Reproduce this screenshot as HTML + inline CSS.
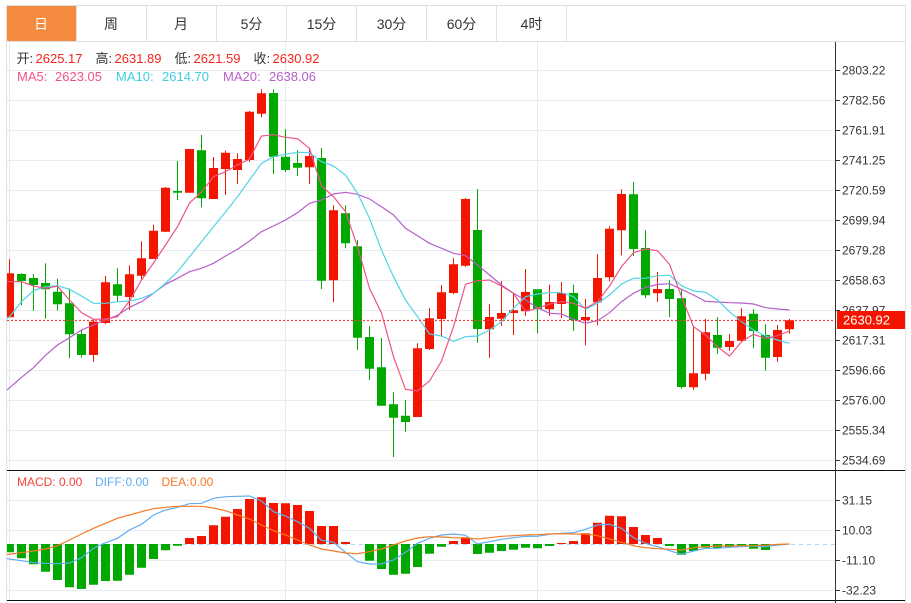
<!DOCTYPE html>
<html><head><meta charset="utf-8"><style>
html,body{margin:0;padding:0;background:#fff;width:911px;height:603px;overflow:hidden}
svg{display:block}
text{font-family:"Liberation Sans","Noto Sans CJK SC",sans-serif}
</style></head><body>
<svg width="911" height="603" viewBox="0 0 911 603" xmlns="http://www.w3.org/2000/svg">
<defs><clipPath id="c"><rect x="7" y="42" width="828" height="561"/></clipPath></defs>
<rect x="7" y="6" width="69.500" height="35" fill="#f58b3f" rx="1"/>
<path d="M6.500 603V5.500H905.500V603M6.500 41.500H905.500M76.500 6V41M146.500 6V41M216.500 6V41M286.500 6V41M356.500 6V41M426.500 6V41M496.500 6V41M566.500 6V41" fill="none" stroke="#e0e0e0"/>
<g font-size="14" fill="#333" text-anchor="middle">
<text x="41" y="29" fill="#fff">日</text><text x="111" y="29">周</text><text x="181" y="29">月</text><text x="251.500" y="29">5分</text><text x="321.500" y="29">15分</text><text x="391.500" y="29">30分</text><text x="461.500" y="29">60分</text><text x="531.500" y="29">4时</text>
</g>
<path d="M7 70.500H835M7 100.500H835M7 130.500H835M7 160.500H835M7 190.500H835M7 220.500H835M7 250.500H835M7 280.500H835M7 310.500H835M7 340.500H835M7 370.500H835M7 400.500H835M7 430.500H835M7 460.500H835M7 500.500H835M7 530.500H835M7 560.500H835M7 590.500H835M9.500 42V470M285.500 42V470M537.500 42V470M9.500 471V600M285.500 471V600M537.500 471V600" fill="none" stroke="#e5edf3"/>
<g clip-path="url(#c)">
<path fill="none" stroke="#00a800" d="M21.500 273.300V305.300M33.500 274V310.700M45.500 263.300V318.700M57.500 278.700V310.700M69.500 288.300V358.300M81.500 330V357.700M117.500 268.300V301.700M177.500 161V200M201.500 135V207.300M273.500 89.300V174M285.500 129.300V172M297.500 150V176M321.500 148V289M345.500 205.300V248.300M357.500 240V350M369.500 326V380M381.500 338V405.700M393.500 392.300V457M405.500 400V431.700M477.500 189V342.700M537.500 289V333.300M573.500 284.700V331M633.500 182V256M645.500 230.300V298.300M669.500 280.300V317M681.500 289V388.700M717.500 317V353.700M753.500 309.300V348.300M765.500 324.300V370.700"/>
<path fill="#00a800" d="M17 274h9V281h-9zM29 278h9V285h-9zM41 283h9V289.300h-9zM53 291.700h9V304.300h-9zM65 303.300h9V334.300h-9zM77 334h9V355h-9zM113 284.300h9V295.700h-9zM173 191h9V192.700h-9zM197 150.300h9V198.300h-9zM269 93h9V156.700h-9zM281 156.700h9V170h-9zM293 163h9V167.700h-9zM317 158h9V280.700h-9zM341 213.300h9V243.300h-9zM353 246.300h9V337.700h-9zM365 337h9V368.700h-9zM377 367.300h9V405.700h-9zM389 404.300h9V417.700h-9zM401 415.700h9V422h-9zM473 230h9V329h-9zM533 289.300h9V309.300h-9zM569 293h9V320h-9zM629 194.300h9V249h-9zM641 248h9V295.300h-9zM665 289h9V299h-9zM677 298.300h9V387h-9zM713 335h9V347.700h-9zM749 313.700h9V331h-9zM761 335h9V357.700h-9z"/>
<path fill="none" stroke="#f41500" d="M9.500 259.300V317M93.500 319V361.700M105.500 276V324.300M129.500 265.300V310M141.500 241.300V280M153.500 224.700V259M165.500 187V232M189.500 149V192.700M213.500 157V199M225.500 150.700V195M237.500 153.300V184M249.500 111V162M261.500 89.300V117.300M309.500 148V184M333.500 205.300V302.300M417.500 343.300V417M429.500 308V350M441.500 285V336.700M453.500 258.300V294.300M465.500 198V266.700M489.500 304.300V357.700M501.500 281V326M513.500 293.300V335M525.500 269V316M549.500 284.700V316M561.500 282V318M585.500 299V345.300M597.500 254.300V325.300M609.500 226.300V281.300M621.500 189.300V255.300M657.500 272V302M693.500 326.700V390M705.500 319V380.300M729.500 334V350.700M741.500 308.300V342.300M777.500 325V361.700M789.500 319V333.700"/>
<path fill="#f41500" d="M5 273.300h9V317.300h-9zM89 321.700h9V355h-9zM101 282.300h9V323h-9zM125 274.300h9V297h-9zM137 258.300h9V275.700h-9zM149 230.700h9V259h-9zM161 187.700h9V231.700h-9zM185 149h9V192.700h-9zM209 168h9V199h-9zM221 152.700h9V169h-9zM233 159h9V170h-9zM245 111.700h9V160h-9zM257 93.300h9V113.700h-9zM305 156h9V167.300h-9zM329 210.300h9V280.300h-9zM413 348.300h9V417h-9zM425 318.300h9V349h-9zM437 292.300h9V319h-9zM449 264.300h9V293h-9zM461 199h9V265.700h-9zM485 317h9V329.300h-9zM497 313h9V318.700h-9zM509 310.300h9V313h-9zM521 292h9V311.300h-9zM545 302h9V309.300h-9zM557 293h9V304h-9zM581 317h9V320h-9zM593 278h9V302.300h-9zM605 228.700h9V277.300h-9zM617 194h9V230.300h-9zM653 289h9V293.300h-9zM689 373.300h9V387.300h-9zM701 332.300h9V373.700h-9zM725 341h9V347h-9zM737 316.300h9V340.700h-9zM773 330h9V357h-9zM785 320.300h9V329.300h-9z"/>
<path fill="none" stroke="#b65fcb" stroke-width="1.200" d="M7 390L21.500 377.300L33.500 367.700L45.500 355.300L57.500 345L69.500 337.700L81.500 330L93.500 325L105.500 320L117.500 315.300L129.500 307.300L141.500 301.700L153.500 293.300L165.500 284.300L177.500 278.300L189.500 271.700L201.500 268.300L213.500 263.300L225.500 256L237.500 249.300L249.500 241L261.500 231.700L273.500 226L285.500 220L297.500 212.700L309.500 203.300L321.500 200L333.500 194L345.500 192.300L357.500 194.300L369.500 199L381.500 206.700L393.500 215L405.500 228.300L417.500 235.700L429.500 243.300L441.500 248.300L453.500 253.300L465.500 255.700L477.500 265L489.500 275L501.500 285L513.500 293.300L525.500 300L537.500 307.700L549.500 313.300L561.500 314L573.500 319.300L585.500 323.300L597.500 320.700L609.500 312.700L621.500 301.700L633.500 293.300L645.500 287.300L657.500 284.500L669.500 283.700L681.500 289.300L693.500 295L705.500 301.300L717.500 302L729.500 302.700L741.500 303L753.500 304L765.500 307.700L777.500 309L789.500 310"/>
<path fill="none" stroke="#4fd3e6" stroke-width="1.200" d="M7 318.500L9.500 316.700L21.500 301.700L33.500 290.700L45.500 286.700L57.500 285.700L69.500 289.300L81.500 296L93.500 303.300L105.500 303.300L117.500 301.700L129.500 301L141.500 298.300L153.500 293.300L165.500 283.300L177.500 271.700L189.500 256.700L201.500 241.700L213.500 226.700L225.500 212L237.500 196.700L249.500 180L261.500 163.300L273.500 156.700L285.500 154.300L297.500 152.300L309.500 152.700L321.500 161.700L333.500 166L345.500 175L357.500 193.300L369.500 218.300L381.500 250L393.500 276.700L405.500 300L417.500 316.700L429.500 334L441.500 336L453.500 341.300L465.500 336.700L477.500 336L489.500 330L501.500 321.700L513.500 308.300L525.500 296.700L537.500 294L549.500 292.700L561.500 292.700L573.500 296.700L585.500 309.300L597.500 303.300L609.500 295L621.500 284L633.500 278.300L645.500 278.300L657.500 275.700L669.500 275.300L681.500 285.700L693.500 291L705.500 292.300L717.500 300L729.500 311.700L741.500 321.700L753.500 330L765.500 336L777.500 340L789.500 343.300"/>
<path fill="none" stroke="#ee5488" stroke-width="1.200" d="M7 281.700L21.500 281.700L33.500 286L45.500 288.300L57.500 286.300L69.500 300L81.500 312.700L93.500 319.300L105.500 319L117.500 316.700L129.500 301L141.500 280L153.500 263L165.500 245L177.500 226.700L189.500 203L201.500 192L213.500 176.700L225.500 171.700L237.500 165L249.500 159L261.500 136L273.500 134.700L285.500 137.300L297.500 138.700L309.500 148.300L321.500 186L333.500 196.700L345.500 211.700L357.500 246.700L369.500 288.300L381.500 313L393.500 356.700L405.500 389.300L417.500 391L429.500 381L441.500 361L453.500 326.700L465.500 284.300L477.500 280.700L489.500 280L501.500 286L513.500 293.300L525.500 311.300L537.500 308.300L549.500 304L561.500 301.700L573.500 303.300L585.500 308.300L597.500 301.700L609.500 286L621.500 266.700L633.500 252.700L645.500 249L657.500 250.700L669.500 264.300L681.500 296.700L693.500 326.700L705.500 335L717.500 346.700L729.500 356L741.500 341.700L753.500 334.300L765.500 338.300L777.500 335.700L789.500 331"/>
<path d="M7 320.500H835" stroke="#f8413a" stroke-width="1.300" stroke-dasharray="2 2" fill="none"/>
<path d="M7 544.500H835" stroke="#a6d8ef" stroke-dasharray="4 4" fill="none"/>
<path fill="#00a800" d="M5 544h9V552.300h-9zM17 544h9V558.300h-9zM29 544h9V564.300h-9zM41 544h9V571.700h-9zM53 544h9V580h-9zM65 544h9V587.300h-9zM77 544h9V589h-9zM89 544h9V584.700h-9zM101 544h9V581h-9zM113 544h9V580.700h-9zM125 544h9V574.700h-9zM137 544h9V567.700h-9zM149 544h9V559h-9zM161 544h9V550.300h-9zM173 544h9V545.700h-9zM365 544h9V560.700h-9zM377 544h9V569h-9zM389 544h9V574.700h-9zM401 544h9V573.700h-9zM413 544h9V567h-9zM425 544h9V553.700h-9zM437 544h9V546.700h-9zM473 544h9V554h-9zM485 544h9V552.700h-9zM497 544h9V551h-9zM509 544h9V549.700h-9zM521 544h9V547.700h-9zM533 544h9V548.300h-9zM545 544h9V546h-9zM665 544h9V546h-9zM677 544h9V554.700h-9zM689 544h9V551h-9zM701 544h9V547.700h-9zM713 544h9V548.300h-9zM725 544h9V547h-9zM737 544h9V546.300h-9zM749 544h9V548.700h-9zM761 544h9V550h-9zM773 544h9V545.300h-9z"/>
<path fill="#f41500" d="M185 538h9V544h-9zM197 536h9V544h-9zM209 525.300h9V544h-9zM221 516.700h9V544h-9zM233 509h9V544h-9zM245 499h9V544h-9zM257 497.300h9V544h-9zM269 503h9V544h-9zM281 503.300h9V544h-9zM293 505h9V544h-9zM305 511h9V544h-9zM317 526h9V544h-9zM329 526h9V544h-9zM341 542h9V544h-9zM449 541h9V544h-9zM461 537.300h9V544h-9zM557 543h9V544h-9zM569 541h9V544h-9zM581 533.300h9V544h-9zM593 522.700h9V544h-9zM605 515.700h9V544h-9zM617 516.300h9V544h-9zM629 527h9V544h-9zM641 535h9V544h-9zM653 538h9V544h-9z"/>
<path fill="none" stroke="#5fadf0" stroke-width="1.200" d="M7 558.700L21.500 560.700L33.500 562.700L45.500 563.300L57.500 563.700L69.500 563L81.500 557.700L93.500 548.300L105.500 542.700L117.500 538.300L129.500 530L141.500 524.300L153.500 515L165.500 510L177.500 507.300L189.500 503.700L201.500 503.300L213.500 498.300L225.500 496.700L237.500 496.300L249.500 496L261.500 501L273.500 511.700L285.500 516L297.500 521.700L309.500 528.300L321.500 540.300L333.500 542.300L345.500 552.300L357.500 561.700L369.500 564L381.500 564L393.500 560L405.500 552.300L417.500 543.300L429.500 538.300L441.500 535L453.500 534L465.500 535.300L477.500 544L489.500 541.700L501.500 539.300L513.500 537.700L525.500 536.300L537.500 536.300L549.500 534.300L561.500 533.300L573.500 532.700L585.500 529.300L597.500 525L609.500 524.300L621.500 528.300L633.500 537.700L645.500 543.300L657.500 546.700L669.500 550.700L681.500 554.300L693.500 551L705.500 548.300L717.500 548.300L729.500 547.300L741.500 546.700L753.500 546L765.500 546.700L777.500 545L789.500 544"/>
<path fill="none" stroke="#f57a23" stroke-width="1.200" d="M7 554.500L21.500 552.700L33.500 551L45.500 549L57.500 545.700L69.500 540L81.500 534L93.500 528.300L105.500 523.300L117.500 518.300L129.500 515L141.500 511.700L153.500 508.700L165.500 507.300L177.500 506.300L189.500 506.300L201.500 506.300L213.500 508L225.500 510.700L237.500 515L249.500 519L261.500 525L273.500 530.700L285.500 535L297.500 540L309.500 545L321.500 549L333.500 551L345.500 553L357.500 553.700L369.500 551.700L381.500 549L393.500 545L405.500 541L417.500 538L429.500 536.700L441.500 537L453.500 537.700L465.500 538L477.500 539L489.500 537.700L501.500 536.300L513.500 535.700L525.500 535L537.500 534.700L549.500 534L561.500 533.700L573.500 534L585.500 534L597.500 535.700L609.500 539L621.500 542.300L633.500 545.700L645.500 547.700L657.500 548.700L669.500 549.300L681.500 550L693.500 547.700L705.500 546.700L717.500 546L729.500 546L741.500 545.700L753.500 545.700L765.500 545.300L777.500 544.300L789.500 544"/>
</g>
<path d="M7 470.500H905M7 600.500H905" stroke="#111" fill="none"/>
<path d="M835.500 42V603" stroke="#333" fill="none"/>
<path d="M836 70.500h4M836 100.500h4M836 130.500h4M836 160.500h4M836 190.500h4M836 220.500h4M836 250.500h4M836 280.500h4M836 310.500h4M836 340.500h4M836 370.500h4M836 400.500h4M836 430.500h4M836 460.500h4M836 500.500h4M836 530.500h4M836 560.500h4M836 590.500h4" stroke="#333" fill="none"/>
<g font-size="12" fill="#333">
<text x="842" y="74.500">2803.22</text><text x="842" y="104.500">2782.56</text><text x="842" y="134.500">2761.91</text><text x="842" y="164.500">2741.25</text><text x="842" y="194.500">2720.59</text><text x="842" y="224.500">2699.94</text><text x="842" y="254.500">2679.28</text><text x="842" y="284.500">2658.63</text><text x="842" y="314.500">2637.97</text><text x="842" y="344.500">2617.31</text><text x="842" y="374.500">2596.66</text><text x="842" y="404.500">2576.00</text><text x="842" y="434.500">2555.34</text><text x="842" y="464.500">2534.69</text>
<text x="842" y="504.500">31.15</text><text x="842" y="534.500">10.03</text><text x="842" y="564.500">-11.10</text><text x="842" y="594.500">-32.23</text>
</g>
<rect x="837" y="311" width="68" height="18" fill="#f41500"/>
<text x="843" y="324.500" font-size="13" fill="#fff">2630.92</text>
<g font-size="13" fill="#333">
<text x="16.500" y="63">开:</text><text x="95.500" y="63">高:</text><text x="174.500" y="63">低:</text><text x="253.500" y="63">收:</text>
</g>
<g font-size="13" fill="#f5251b">
<text x="35.500" y="63">2625.17</text><text x="114.500" y="63">2631.89</text><text x="193.500" y="63">2621.59</text><text x="272.500" y="63">2630.92</text>
</g>
<g font-size="13">
<text x="17" y="81" fill="#ee5488">MA5:</text><text x="55" y="81" fill="#ee5488">2623.05</text>
<text x="116" y="81" fill="#3fcde2">MA10:</text><text x="162" y="81" fill="#3fcde2">2614.70</text>
<text x="223" y="81" fill="#b65fcb">MA20:</text><text x="269" y="81" fill="#b65fcb">2638.06</text>
</g>
<g font-size="12">
<text x="17" y="486" fill="#f5403a">MACD:</text><text x="59" y="486" fill="#f5403a">0.00</text>
<text x="95" y="486" fill="#5fadf0">DIFF:</text><text x="125.500" y="486" fill="#5fadf0">0.00</text>
<text x="161.500" y="486" fill="#f57a23">DEA:</text><text x="190" y="486" fill="#f57a23">0.00</text>
</g>
</svg>
</body></html>
